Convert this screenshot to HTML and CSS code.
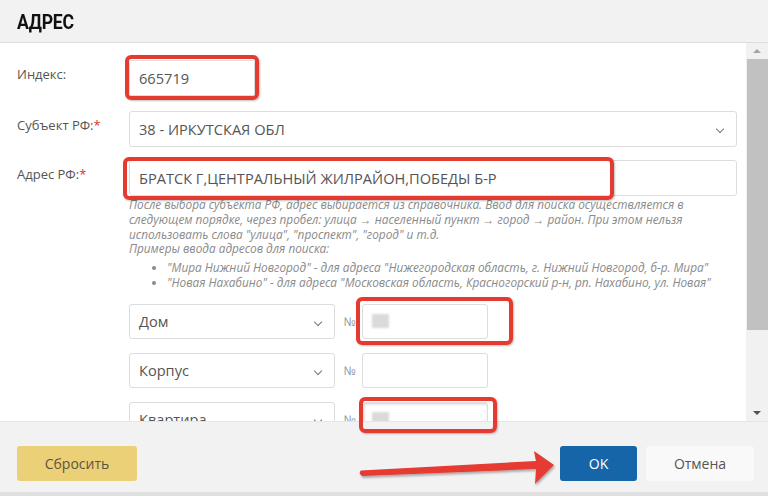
FILE: index.html
```html
<!DOCTYPE html>
<html lang="ru">
<head>
<meta charset="utf-8">
<link rel="stylesheet" href="styles.css">
</head>
<body>
<div class="dialog">
  <div class="header"><h1 class="title">АДРЕС</h1></div>
  <div class="body">
    <div class="content">
      <div class="row">
        <label class="label">Индекс:</label>
        <div class="field index-field">665719</div>
      </div>
      <div class="row row-subj">
        <label class="label">Субъект РФ:<span class="req">*</span></label>
        <div class="field select">38 - ИРКУТСКАЯ ОБЛ<span class="chev"></span></div>
      </div>
      <div class="row row-addr">
        <label class="label">Адрес РФ:<span class="req">*</span></label>
        <div class="field">БРАТСК Г,ЦЕНТРАЛЬНЫЙ ЖИЛРАЙОН,ПОБЕДЫ Б-Р</div>
      </div>
      <div class="help">
        <p class="help-text">После выбора субъекта РФ, адрес выбирается из справочника. Ввод для поиска осуществляется в следующем порядке, через пробел: улица → населенный пункт → город → район. При этом нельзя использовать слова "улица", "проспект", "город" и т.д.</p>
        <p>Примеры ввода адресов для поиска:</p>
        <ul>
          <li>"Мира Нижний Новгород" - для адреса "Нижегородская область, г. Нижний Новгород, б-р. Мира"</li>
          <li>"Новая Нахабино" - для адреса "Московская область, Красногорский р-н, рп. Нахабино, ул. Новая"</li>
        </ul>
      </div>
      <div class="sub-row">
        <div class="field select small-select">Дом<span class="chev"></span></div>
        <span class="num">№</span>
        <div class="field num-field"><span class="blur"></span></div>
      </div>
      <div class="sub-row">
        <div class="field select small-select">Корпус<span class="chev"></span></div>
        <span class="num">№</span>
        <div class="field num-field"></div>
      </div>
      <div class="sub-row">
        <div class="field select small-select">Квартира<span class="chev"></span></div>
        <span class="num">№</span>
        <div class="field num-field focused"><span class="blur"></span></div>
      </div>
    </div>
    <div class="scrollbar">
      <span class="arrow-up"></span>
      <div class="thumb"></div>
      <span class="arrow-down"></span>
    </div>
  </div>
  <div class="footer">
    <button class="btn btn-reset">Сбросить</button>
    <div class="spacer"></div>
    <button class="btn btn-ok">OK</button>
    <button class="btn btn-cancel">Отмена</button>
  </div>

  <div class="mark mark-1"></div>
  <div class="mark mark-2"></div>
  <div class="mark mark-3"></div>
  <div class="mark mark-4"></div>
  <svg class="pointer" width="768" height="496" viewBox="0 0 768 496">
    <defs>
      <filter id="sh" x="-10%" y="-50%" width="120%" height="200%">
        <feDropShadow dx="1" dy="2" stdDeviation="1.2" flood-color="#000" flood-opacity="0.3"/>
      </filter>
    </defs>
    <path d="M361 470.5 L536 461 L534 451 L554 465 L535 484 L536 469 L362 476 Q358 473 361 470.5 Z" fill="#e53a30" filter="url(#sh)"/>
  </svg>
</div>
</body>
</html>
```

FILE: styles.css
```css
* { box-sizing: border-box; }
html, body { margin: 0; padding: 0; }
body {
  font-family: "Open Sans", "Noto Sans", sans-serif;
  color: #555;
  background: #fff;
}
.dialog {
  position: relative;
  width: 768px;
  height: 496px;
  overflow: hidden;
  display: flex;
  flex-direction: column;
}
.header {
  height: 43px;
  flex: none;
  background: #f2f2f2;
  border-bottom: 1px solid #dcdcdc;
  padding-left: 17px;
  display: flex;
  align-items: center;
}
.title {
  margin: 0;
  font-family: "Roboto", sans-serif;
  font-weight: 700;
  font-size: 21px;
  color: #111;
  letter-spacing: -0.3px;
  padding-top: 1px;
  transform: scaleX(0.84);
  transform-origin: left center;
}
.body {
  height: 378px;
  flex: none;
  display: flex;
}
.content {
  flex: 1;
  overflow: hidden;
  padding: 17px 9px 0 17px;
}
.row {
  display: flex;
  align-items: flex-start;
  margin-bottom: 15px;
}
.row-subj { margin-bottom: 13px; }
.row-addr { margin-bottom: 1px; }
.label {
  width: 112px;
  flex: none;
  font-size: 13px;
  padding-top: 5px;
  color: #555;
}
.req { color: #e0302b; }
.field {
  flex: 1;
  height: 36px;
  border: 1px solid #dddddd;
  border-radius: 3px;
  background: #fff;
  font-size: 14.6px;
  color: #555;
  padding: 0 9px;
  display: flex;
  align-items: center;
  position: relative;
}
.index-field { flex: none; width: 126px; }
.select { padding-right: 30px; }
.chev {
  position: absolute;
  right: 13px;
  top: 14px;
  width: 6px;
  height: 6px;
  border-right: 1.3px solid #6d7b8a;
  border-bottom: 1.3px solid #6d7b8a;
  transform: rotate(45deg);
}
.help {
  margin-left: 112px;
  font-size: 11.8px;
  font-style: italic;
  line-height: 14.8px;
  color: #8a8a8a;
  margin-bottom: 14px;
}
.help p { margin: 0; }
.help .help-text { max-width: 562px; }
.help ul {
  margin: 4px 0 0;
  padding-left: 38px;
}
.sub-row {
  display: flex;
  align-items: center;
  margin-left: 112px;
  margin-bottom: 14px;
}
.sub-row .field { height: 35px; }
.small-select { flex: none; width: 206px; }
.num {
  width: 27px;
  text-align: center;
  font-size: 12px;
  color: #8a96a3;
  flex: none;
  padding-left: 2px;
}
.sub-row .num-field { flex: none; width: 126px; }
.focused { box-shadow: inset 1px 1px 3px rgba(0,0,0,0.2); }
.blur {
  display: block;
  width: 17px;
  height: 14px;
  background: #dadada;
  filter: blur(1px);
}
.scrollbar {
  width: 22px;
  flex: none;
  background: #f1f1f1;
  position: relative;
  display: flex;
  flex-direction: column;
  align-items: stretch;
}
.arrow-up, .arrow-down {
  height: 16px;
  position: relative;
}
.arrow-up::after, .arrow-down::after {
  content: "";
  position: absolute;
  left: 50%;
  top: 6px;
  transform: translateX(-50%);
  border-left: 4px solid transparent;
  border-right: 4px solid transparent;
}
.arrow-up::after { border-bottom: 4px solid #a3a3a3; }
.arrow-down { margin-top: auto; }
.arrow-down::after { border-top: 4px solid #505050; }
.thumb {
  height: 271px;
  margin-left: 1px;
  background: #c1c1c1;
}
.footer {
  flex: 1;
  background: #f2f2f2;
  border-top: 1px solid #e6e6e6;
  border-bottom: 4px solid #e0e0e0;
  display: flex;
  align-items: flex-start;
  padding: 24px 14px 0 17px;
  gap: 9px;
}
.spacer { flex: 1; }
.btn {
  height: 35px;
  border: none;
  border-radius: 3px;
  font-family: "Open Sans", sans-serif;
  font-size: 14px;
  cursor: pointer;
}
.btn-reset {
  width: 120px;
  background: #ecd077;
  color: #5b5440;
}
.btn-ok {
  width: 77px;
  background: #1565a8;
  color: #fff;
}
.btn-cancel {
  width: 108px;
  background: #f9f9f9;
  color: #555;
}
.mark {
  position: absolute;
  border: 4px solid #e53a30;
  border-radius: 6px;
  box-shadow: 1px 1px 2px rgba(0,0,0,0.25);
}
.mark-1 { left: 125px; top: 55px; width: 134px; height: 45px; }
.mark-2 { left: 123px; top: 157px; width: 491px; height: 43px; }
.mark-3 { left: 356px; top: 297px; width: 157px; height: 48px; }
.mark-4 { left: 359px; top: 397px; width: 138px; height: 36px; }
.pointer {
  position: absolute;
  left: 0;
  top: 0;
  pointer-events: none;
}
```
